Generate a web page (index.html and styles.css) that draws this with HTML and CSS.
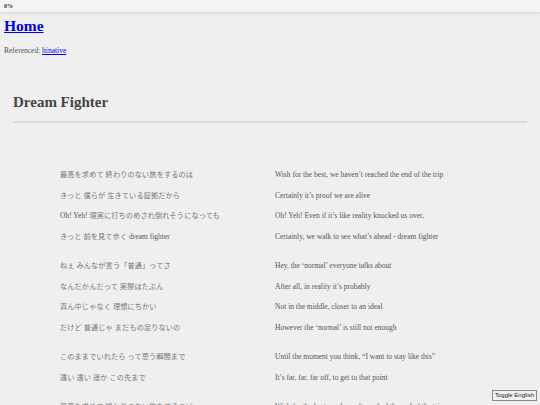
FILE: index.html
```html
<!DOCTYPE html>
<html lang="ja">
<head>
<meta charset="utf-8">
<title>Dream Fighter</title>
<link rel="stylesheet" href="styles.css">
</head>
<body>
<div class="progress">0%</div>
<header class="header">
  <h1 class="home"><a href="#">Home</a></h1>
  <p class="ref">Referenced: <a href="#">hinative</a></p>
</header>
<main class="song">
  <h2 class="title">Dream Fighter</h2>
  <hr class="rule">
  <div class="lyrics">
    <div class="stanza">
      <div class="line"><span class="jp">最高を求めて 終わりのない旅をするのは</span><span class="en">Wish for the best, we haven’t reached the end of the trip</span></div>
      <div class="line"><span class="jp">きっと 僕らが 生きている証拠だから</span><span class="en">Certainly it’s proof we are alive</span></div>
      <div class="line"><span class="jp"><span class="latin">Oh! Yeh!</span> 現実に打ちのめされ倒れそうになっても</span><span class="en">Oh! Yeh! Even if it’s like reality knocked us over,</span></div>
      <div class="line"><span class="jp">きっと 前を見て歩く <span class="latin">dream fighter</span></span><span class="en">Certainly, we walk to see what’s ahead - dream fighter</span></div>
    </div>
    <div class="stanza">
      <div class="line"><span class="jp">ねぇ みんなが言う「普通」ってさ</span><span class="en">Hey, the ‘normal’ everyone talks about</span></div>
      <div class="line"><span class="jp">なんだかんだって 実際はたぶん</span><span class="en">After all, in reality it’s probably</span></div>
      <div class="line"><span class="jp">真ん中じゃなく 理想にちかい</span><span class="en">Not in the middle, closer to an ideal</span></div>
      <div class="line"><span class="jp">だけど 普通じゃ まだもの足りないの</span><span class="en">However the ‘normal’ is still not enough</span></div>
    </div>
    <div class="stanza">
      <div class="line"><span class="jp">このままでいれたら って思う瞬間まで</span><span class="en">Until the moment you think, “I want to stay like this”</span></div>
      <div class="line"><span class="jp">遠い 遠い 遥か この先まで</span><span class="en">It’s far, far, far off, to get to that point</span></div>
    </div>
    <div class="stanza">
      <div class="line"><span class="jp">最高を求めて 終わりのない旅をするのは</span><span class="en">Wish for the best, we haven’t reached the end of the trip</span></div>
      <div class="line"><span class="jp">きっと 僕らが 生きている証拠だから</span><span class="en">Certainly it’s proof we are alive</span></div>
    </div>
  </div>
</main>
<button class="toggle" type="button">Toggle English</button>
</body>
</html>
```
FILE: styles.css
```css
html, body {
  margin: 0;
  padding: 0;
  background: #efefef;
  font-family: "Liberation Serif", "Noto Sans CJK JP", serif;
}

.progress {
  height: 12px;
  line-height: 12px;
  padding-left: 4px;
  font-size: 6px;
  font-weight: bold;
  color: #333;
  background: #f4f4f4;
  box-shadow: 0 1px 3px rgba(0, 0, 0, 0.12);
}

.header {
  padding: 0 4px;
}

.home {
  margin: 5px 0 0;
  font-size: 15.5px;
  line-height: 18px;
  font-weight: bold;
}

.home a {
  color: #0000ee;
}

.ref {
  margin: 11px 0 0;
  font-size: 7.5px;
  line-height: 10px;
  color: #555;
}

.ref a {
  color: #0000ee;
}

.song {
  padding: 0 13px;
}

.title {
  margin: 37px 0 0;
  font-size: 15px;
  line-height: 18px;
  font-weight: bold;
  color: #444;
}

.rule {
  margin: 10px 0 0;
  border: 0;
  height: 2px;
  background: #dcdcdc;
}

.lyrics {
  padding: 45px 0 0 47px;
}

.stanza {
  margin-bottom: 8.3px;
}

.line {
  display: grid;
  grid-template-columns: 215px 1fr;
  height: 20.7px;
  line-height: 14px;
  color: #555;
}

.jp {
  font-size: 7.2px;
  letter-spacing: 0.1px;
  color: #777;
}

.latin {
  font-size: 7.5px;
  letter-spacing: 0;
  color: #555;
}

.en {
  font-size: 7.5px;
}

.toggle {
  position: fixed;
  right: 3px;
  bottom: 4px;
  margin: 0;
  padding: 0 2px;
  height: 11px;
  font-family: "Liberation Sans", Arial, sans-serif;
  font-size: 6px;
  line-height: 9px;
  color: #222;
  background: #f0f0f0;
  border: 1px solid #888;
  border-radius: 0;
}
```
